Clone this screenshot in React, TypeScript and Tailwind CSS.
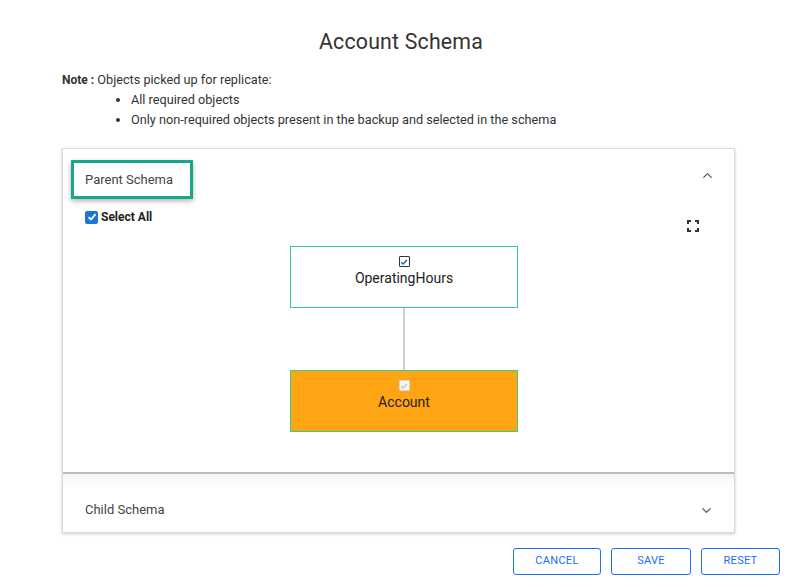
import { ChevronDown, ChevronUp } from "lucide-react";

const font = { fontFamily: "Roboto, 'Noto Sans', sans-serif" };

function MiniCheck({ disabled }: { disabled?: boolean }) {
	return (
		<span
			className={
				disabled
					? "w-[11px] h-[11px] border border-gray-300 bg-[#f4f4f4] grid place-items-center rounded-[1px]"
					: "w-[11px] h-[11px] border border-[#333] bg-white grid place-items-center rounded-[1px]"
			}
		>
			<svg width="8" height="8" viewBox="0 0 10 10">
				<path
					d="M1.5 5.2 L4 7.6 L8.6 2.4"
					fill="none"
					stroke={disabled ? "#c9c9c9" : "#1565c0"}
					strokeWidth="1.8"
				/>
			</svg>
		</span>
	);
}

function Node({ label, orange }: { label: string; orange?: boolean }) {
	return (
		<div
			className={
				orange
					? "w-[228px] h-[62px] border border-[#2fd08a] bg-[#ffa412] flex flex-col items-center pt-[9px]"
					: "w-[228px] h-[62px] border border-[#2fd08a] bg-white flex flex-col items-center pt-[9px]"
			}
		>
			<MiniCheck disabled={orange} />
			<span className="text-[14px] leading-[20px] mt-[1px] text-[#222]">{label}</span>
		</div>
	);
}

function ExpandIcon() {
	return (
		<svg width="12" height="12" viewBox="0 0 12 12" fill="none" stroke="#333" strokeWidth="2">
			<path d="M1 4 V1 H4" />
			<path d="M8 1 H11 V4" />
			<path d="M11 8 V11 H8" />
			<path d="M4 11 H1 V8" />
		</svg>
	);
}

export default function App() {
	return (
		<div className="w-[801px] h-[587px] bg-white relative overflow-hidden" style={font}>
			{/* title */}
			<h1 className="text-center text-[21.3px] leading-[28px] pt-[28px] text-[#333] tracking-[0.2px] pl-[1px]">
				Account Schema
			</h1>

			{/* note */}
			<div className="mt-[14px] pl-[62px] text-[12.7px] leading-[20px] text-[#333]">
				<div>
					<span className="font-bold text-[12px]">Note :</span> Objects picked up for replicate:
				</div>
				<ul className="pl-[69px] list-disc">
					<li>All required objects</li>
					<li>Only non-required objects present in the backup and selected in the schema</li>
				</ul>
			</div>

			{/* accordion */}
			<div className="mt-[18px] ml-[62px] w-[673px] border border-[#d9d9d9] shadow-[0_1px_3px_rgba(0,0,0,0.2)] bg-white">
				<div className="h-[325px] border-b-2 border-[#bdbdbd] relative">
					<div className="flex items-start justify-between pl-[8px] pr-[19px] pt-[11px]">
						<div className="w-[122px] h-[39px] border-[3px] border-[#17a689] shadow-[0_2px_5px_rgba(0,0,0,0.3)] flex items-center pl-[11px] text-[13px] text-[#444]">
							Parent Schema
						</div>
						<ChevronUp size={15} strokeWidth={2} className="text-[#555] mt-[8px]" />
					</div>
					<div className="flex items-center gap-[3px] pl-[22px] mt-[9px]">
						<span className="w-[13px] h-[13px] bg-[#1976d2] rounded-[2px] grid place-items-center">
							<svg width="10" height="10" viewBox="0 0 10 10">
								<path d="M1.5 5.2 L4 7.5 L8.6 2.2" fill="none" stroke="white" strokeWidth="1.8" />
							</svg>
						</span>
						<span className="text-[12px] font-bold text-[#222]">Select All</span>
					</div>
					<div className="absolute right-[35px] top-[71px]">
						<ExpandIcon />
					</div>
					<div className="flex flex-col items-center ml-[11px] mt-[20px]">
						<Node label="OperatingHours" />
						<div className="w-[2px] h-[62px] bg-[#cfcfcf]" />
						<Node label="Account" orange />
					</div>
				</div>
				<div className="h-[14px] bg-gradient-to-b from-[#f4f4f4] to-white" />
				<div className="h-[44px] flex items-center justify-between pl-[22px] pr-[20px]">
					<span className="text-[13px] text-[#444]">Child Schema</span>
					<ChevronDown size={15} strokeWidth={2} className="text-[#555]" />
				</div>
			</div>

			{/* buttons */}
			<div className="flex justify-end gap-[10px] pr-[21px] mt-[15px]">
				{["CANCEL", "SAVE", "RESET"].map((b, i) => (
					<button
						key={b}
						className={
							(i === 0 ? "w-[88px]" : i === 1 ? "w-[80px]" : "w-[79px]") +
							" h-[27px] border border-[#1a6dff] rounded-[3px] text-[11px] text-[#1a6dff] tracking-[0.3px] bg-white"
						}
					>
						{b}
					</button>
				))}
			</div>
		</div>
	);
}
